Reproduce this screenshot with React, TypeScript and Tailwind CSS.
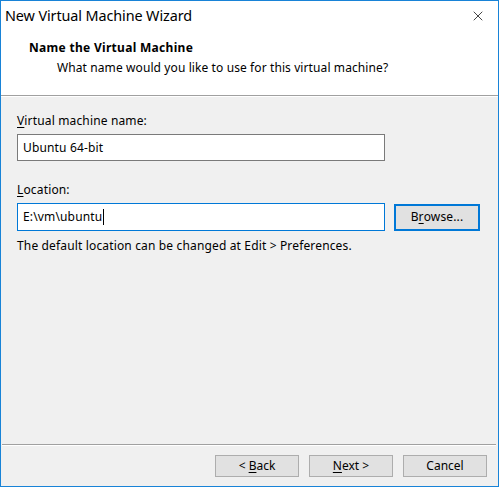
import { X } from 'lucide-react'

const font = "font-['Segoe_UI','Noto_Sans',sans-serif]"

function WinButton({ children }: { children: React.ReactNode }) {
  return (
    <button className="w-[84px] h-[22px] border border-[#adadad] bg-[#e1e1e1] text-[12px] text-black flex items-center justify-center">
      <span className="whitespace-pre">{children}</span>
    </button>
  )
}

export default function App() {
  return (
    <div className={`${font} w-[499px] h-[487px] border border-[#1883d7] bg-[#f0f0f0] flex flex-col text-black`}>
      {/* title bar */}
      <div className="h-[30px] bg-white flex items-center justify-between pl-[4px] pr-[12px]">
        <span className="text-[14.4px] tracking-[-0.1px]">New Virtual Machine Wizard</span>
        <X size={16} strokeWidth={1.1} className="text-black" />
      </div>

      {/* header */}
      <div className="h-[65px] bg-white border-b border-[#a0a0a0] pl-[28px] pt-[9px]">
        <div className="text-[12px] font-bold leading-[16px] tracking-[0.3px]">Name the Virtual Machine</div>
        <div className="text-[12px] leading-[16px] pl-[28px] mt-[4px] tracking-[0.1px]">
          What name would you like to use for this virtual machine?
        </div>
      </div>
      <div className="h-px bg-white" />

      {/* body */}
      <div className="flex-1 px-[16px] pt-[16px] text-[12px] leading-[16px] tracking-[0.15px]">
        <div>
          <span className="underline underline-offset-2">V</span>irtual machine name:
        </div>
        <div className="mt-[5px] w-[368px] h-[27px] border border-[#7a7a7a] bg-white flex items-center px-[5px]">
          Ubuntu 64-bit
        </div>

        <div className="mt-[21px]">
          <span className="underline underline-offset-2">L</span>ocation:
        </div>
        <div className="mt-[5px] flex items-center gap-[9px]">
          <div className="w-[368px] h-[28px] border border-[#0078d7] bg-white flex items-center px-[5px]">
            <span>E:\vm\ubuntu</span>
            <span className="w-px h-[16px] bg-black ml-[1px]" />
          </div>
          <button className="w-[86px] h-[27px] border-2 border-[#0078d7] bg-[#e1e1e1] flex items-center justify-center">
            B<span className="underline underline-offset-2">r</span>owse...
          </button>
        </div>

        <div className="mt-[7px]">The default location can be changed at Edit &gt; Preferences.</div>
      </div>

      {/* footer */}
      <div className="ml-[1px] mr-[2px] h-px bg-[#a0a0a0]" />
      <div className="ml-[1px] mr-[2px] h-px bg-white" />
      <div className="flex justify-end gap-[10px] pr-[11px] pt-[9px] pb-[9px]">
        <WinButton>
          {'< '}
          <span className="underline underline-offset-2">B</span>ack
        </WinButton>
        <WinButton>
          <span className="underline underline-offset-2">N</span>
          {'ext >'}
        </WinButton>
        <WinButton>Cancel</WinButton>
      </div>
    </div>
  )
}
